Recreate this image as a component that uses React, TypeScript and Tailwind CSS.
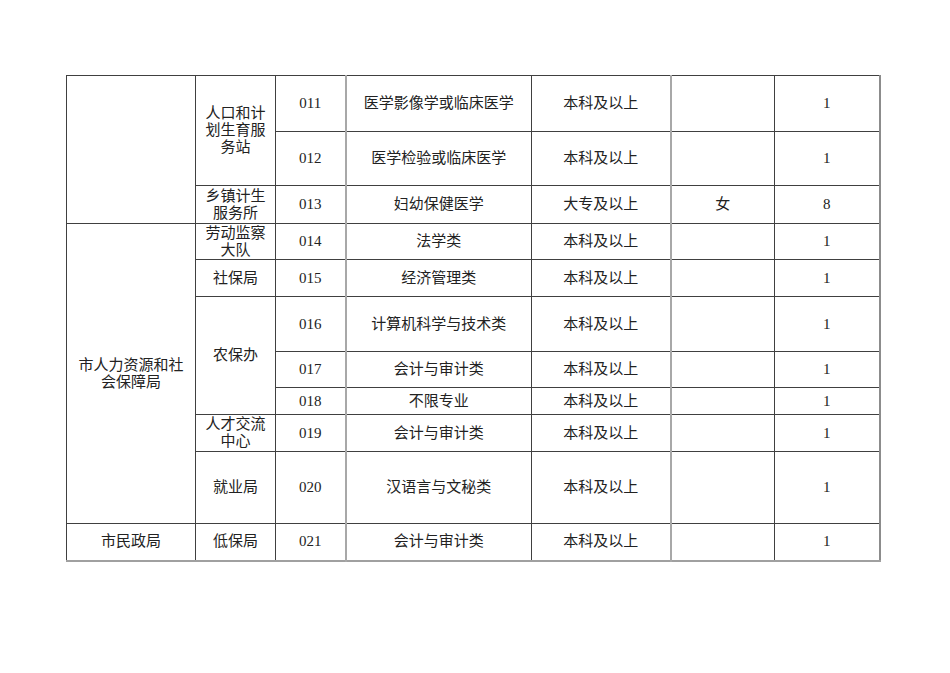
const FONT = "font-['Liberation_Serif','Noto_Sans_CJK_SC',serif]";

type Row = {
  h: string;
  dept?: { text: React.ReactNode; span: number };
  unit?: { text: React.ReactNode; span: number };
  code: string;
  major: string;
  edu: string;
  sex: string;
  num: string;
};

const rows: Row[] = [
  { h: "h-[56px]", dept: { text: "", span: 3 }, unit: { text: <>人口和计<br />划生育服<br />务站</>, span: 2 }, code: "011", major: "医学影像学或临床医学", edu: "本科及以上", sex: "", num: "1" },
  { h: "h-[54px]", code: "012", major: "医学检验或临床医学", edu: "本科及以上", sex: "", num: "1" },
  { h: "h-[38px]", unit: { text: <>乡镇计生<br />服务所</>, span: 1 }, code: "013", major: "妇幼保健医学", edu: "大专及以上", sex: "女", num: "8" },
  { h: "h-[36px]", dept: { text: <>市人力资源和社<br />会保障局</>, span: 7 }, unit: { text: <>劳动监察<br />大队</>, span: 1 }, code: "014", major: "法学类", edu: "本科及以上", sex: "", num: "1" },
  { h: "h-[37px]", unit: { text: "社保局", span: 1 }, code: "015", major: "经济管理类", edu: "本科及以上", sex: "", num: "1" },
  { h: "h-[55px]", unit: { text: "农保办", span: 3 }, code: "016", major: "计算机科学与技术类", edu: "本科及以上", sex: "", num: "1" },
  { h: "h-[36px]", code: "017", major: "会计与审计类", edu: "本科及以上", sex: "", num: "1" },
  { h: "h-[27px]", code: "018", major: "不限专业", edu: "本科及以上", sex: "", num: "1" },
  { h: "h-[37px]", unit: { text: <>人才交流<br />中心</>, span: 1 }, code: "019", major: "会计与审计类", edu: "本科及以上", sex: "", num: "1" },
  { h: "h-[72px]", unit: { text: "就业局", span: 1 }, code: "020", major: "汉语言与文秘类", edu: "本科及以上", sex: "", num: "1" },
  { h: "h-[37px]", dept: { text: "市民政局", span: 1 }, unit: { text: "低保局", span: 1 }, code: "021", major: "会计与审计类", edu: "本科及以上", sex: "", num: "1" },
];

const cell = "border border-[#404040] p-0 text-center align-middle";
const grayL = "border-l-[2px] border-l-[#a8a8a8]";

export default function App() {
  return (
    <div className={`min-h-[673px] w-[950px] bg-white pl-[66px] pt-[75px] text-[15px] leading-[17px] text-[#222] ${FONT}`}>
      <table className="w-[813px] table-fixed border-collapse border-r-[2px] border-b-[2px] border-r-[#8c8c8c] border-b-[#a0a0a0]">
        <colgroup>
          <col className="w-[129px]" />
          <col className="w-[80px]" />
          <col className="w-[70px]" />
          <col className="w-[186px]" />
          <col className="w-[139px]" />
          <col className="w-[104px]" />
          <col className="w-[105px]" />
        </colgroup>
        <tbody>
          {rows.map((r) => (
            <tr key={r.code} className={r.h}>
              {r.dept && (
                <td rowSpan={r.dept.span} className={`${cell} px-[6px]`}>
                  {r.dept.text}
                </td>
              )}
              {r.unit && (
                <td rowSpan={r.unit.span} className={`${cell} px-[6px]`}>
                  {r.unit.text}
                </td>
              )}
              <td className={cell}>{r.code}</td>
              <td className={`${cell} ${grayL}`}>{r.major}</td>
              <td className={cell}>{r.edu}</td>
              <td className={`${cell} ${grayL}`}>{r.sex}</td>
              <td className={cell}>{r.num}</td>
            </tr>
          ))}
        </tbody>
      </table>
    </div>
  );
}
